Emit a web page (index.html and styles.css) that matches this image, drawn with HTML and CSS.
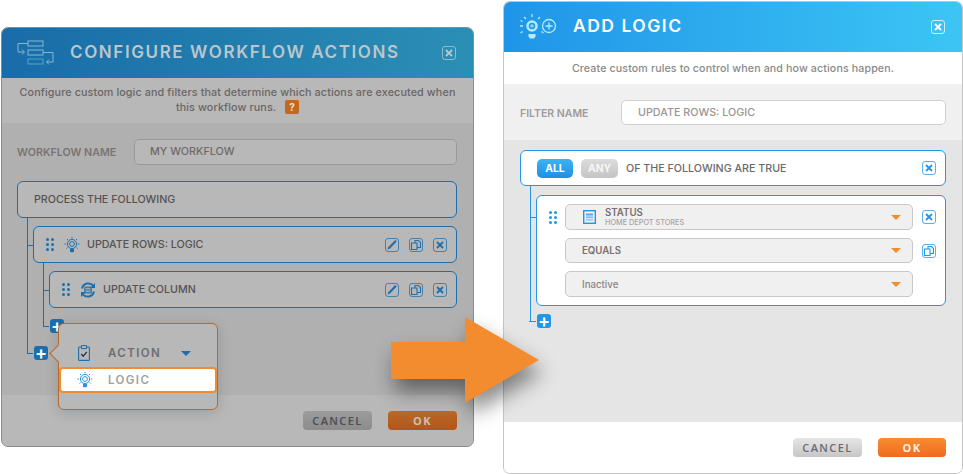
FILE: index.html
```html
<!DOCTYPE html>
<html lang="en">
<head>
  <meta charset="UTF-8">
  <meta name="viewport" content="width=device-width, initial-scale=1.0">
  <title>Workflow Logic</title>
  <link rel="stylesheet" href="styles.css">
</head>
<body>
  <svg class="sprites" width="0" height="0">
    <symbol id="i-close" viewBox="0 0 14 14">
      <rect x=".5" y=".5" width="13" height="13" rx="2.5" fill="none" stroke="currentColor" opacity=".75"/>
      <path d="M4 4l6 6M10 4l-6 6" fill="none" stroke="currentColor" stroke-width="1.8"/>
    </symbol>
    <symbol id="i-edit" viewBox="0 0 14 14">
      <rect x=".5" y=".5" width="13" height="13" rx="2.5" fill="none" stroke="currentColor" opacity=".75"/>
      <path d="M4.200 9.800l6.800-7" fill="none" stroke="currentColor" stroke-width="2.200"/>
      <path d="M2.500 11.500l.9-2.700 1.800 1.800z" fill="currentColor"/>
    </symbol>
    <symbol id="i-copy" viewBox="0 0 14 14">
      <rect x=".5" y=".5" width="13" height="13" rx="2.5" fill="none" stroke="currentColor" opacity=".75"/>
      <path d="M2.500 5h5.500v6.500H2.500zM6 5V2.500h3.500L11.500 4.500v5H8" fill="none" stroke="currentColor" stroke-width="1.100"/>
    </symbol>
    <symbol id="i-grip" viewBox="0 0 8 13">
      <g fill="currentColor">
        <circle cx="1.5" cy="1.6" r="1.5"/><circle cx="6.5" cy="1.6" r="1.5"/>
        <circle cx="1.5" cy="6.5" r="1.5"/><circle cx="6.5" cy="6.5" r="1.5"/>
        <circle cx="1.5" cy="11.4" r="1.5"/><circle cx="6.5" cy="11.4" r="1.5"/>
      </g>
    </symbol>
    <symbol id="i-bulb" viewBox="0 0 16 16">
      <g fill="none" stroke="currentColor">
        <circle cx="8" cy="7" r="4.6"/>
        <circle cx="8" cy="7" r="2.4"/>
        <path d="M8 0v1.400M3 2l1 1M13 2l-1 1M.5 7h1.600M13.900 7h1.600M2.500 11.500l1-1M13.500 11.500l-1-1" stroke-dasharray="1.4 .6"/>
      </g>
      <path d="M6 12h4v2.200l-1 1H7l-1-1z" fill="currentColor"/>
    </symbol>
    <symbol id="i-sync" viewBox="0 0 16 16">
      <path d="M2 6.500A6.500 6.500 0 0 1 13.500 4M14 9.500A6.500 6.500 0 0 1 2.500 12" fill="none" stroke="currentColor" stroke-width="2"/>
      <path d="M15 1v5h-5zM1 15v-5h5z" fill="currentColor"/>
      <rect x="4" y="4.500" width="8" height="7" rx="1" fill="currentColor" opacity=".8"/>
      <path d="M5.500 6.500h5M5.500 8h5M5.500 9.500h5" stroke="#b8b8b8" stroke-width=".7"/>
    </symbol>
    <symbol id="i-clipboard" viewBox="0 0 12 16">
      <rect x=".6" y="2" width="10.800" height="13.400" rx="1" fill="none" stroke="currentColor" stroke-width="1.100"/>
      <path d="M3.500 .6h5v3h-5z" fill="#b8b8b8" stroke="currentColor"/>
      <path d="M3.200 9l2 2.200 3.600-4.400" fill="none" stroke="#2b2f36" stroke-width="1.300"/>
    </symbol>
    <symbol id="i-doc" viewBox="0 0 13 14">
      <rect x=".7" y=".7" width="11.600" height="12.600" fill="none" stroke="currentColor" stroke-width="1.400"/>
      <rect x="3" y="3.500" width="7" height="2" fill="currentColor" opacity=".75"/>
      <rect x="3" y="6.500" width="7" height="1.600" fill="currentColor" opacity=".6"/>
      <rect x="3" y="9" width="7" height="1.600" fill="currentColor" opacity=".45"/>
    </symbol>
  </svg>

  <section class="dialog dialog-dim">
    <header class="head">
      <svg class="head-icon" width="38" height="26" viewBox="0 0 38 26" fill="none" stroke="#82b9d2">
        <rect x="11" y="1" width="15" height="5"/>
        <rect x="11" y="10" width="15" height="5"/>
        <rect x="11" y="19" width="15" height="5" stroke="#4ea6c6"/>
        <path d="M11 3.500H1V12h6M5 9.500L7.500 12 5 14.500"/>
        <path d="M26 12.500h10V22h-6.500M32 19.500L29.500 22l2.500 2.500"/>
      </svg>
      <h1 class="title">CONFIGURE WORKFLOW ACTIONS</h1>
      <svg class="btn-icon head-close"><use href="#i-close"/></svg>
    </header>
    <p class="intro">Configure custom logic and filters that determine which actions are executed when<br>this workflow runs. <span class="help">?</span></p>
    <div class="main">
      <div class="field">
        <label class="field-label">WORKFLOW NAME</label>
        <div class="field-input">MY WORKFLOW</div>
      </div>
      <div class="tree">
        <div class="node node-root">PROCESS THE FOLLOWING</div>
        <div class="branch">
          <div class="node node-child">
            <svg class="grip"><use href="#i-grip"/></svg>
            <svg class="node-icon"><use href="#i-bulb"/></svg>
            <span class="node-name">UPDATE ROWS: LOGIC</span>
            <svg class="btn-icon"><use href="#i-edit"/></svg>
            <svg class="btn-icon"><use href="#i-copy"/></svg>
            <svg class="btn-icon"><use href="#i-close"/></svg>
          </div>
          <div class="branch branch-nested">
            <div class="node node-child">
              <svg class="grip"><use href="#i-grip"/></svg>
              <svg class="node-icon"><use href="#i-sync"/></svg>
              <span class="node-name">UPDATE COLUMN</span>
              <svg class="btn-icon"><use href="#i-edit"/></svg>
              <svg class="btn-icon"><use href="#i-copy"/></svg>
              <svg class="btn-icon"><use href="#i-close"/></svg>
            </div>
            <div class="add add-nested">+</div>
          </div>
          <div class="add add-outer">+</div>
        </div>
      </div>
    </div>
    <footer class="foot">
      <button class="btn btn-cancel">CANCEL</button>
      <button class="btn btn-ok">OK</button>
    </footer>

    <div class="popup">
      <div class="popup-item">
        <svg class="popup-icon popup-clip"><use href="#i-clipboard"/></svg>
        <span class="popup-text">ACTION</span>
        <span class="popup-caret"></span>
      </div>
      <div class="popup-item popup-active">
        <svg class="popup-icon popup-bulb"><use href="#i-bulb"/></svg>
        <span class="popup-text">LOGIC</span>
      </div>
    </div>
  </section>

  <section class="dialog dialog-logic">
    <header class="head">
      <svg class="head-icon" width="38" height="26" viewBox="0 0 38 26" fill="none" stroke="#b5ecfb">
        <circle cx="13" cy="12" r="4.500" stroke-width="2.500"/>
        <circle cx="13" cy="12" r="1.200"/>
        <path d="M13 0v3M5 3l2 2M21 3l-2 2M1 12h3M1.500 19l2-1.500M24.500 19l-2-1.500M1.500 6.500l2 1" stroke-width="1.300"/>
        <path d="M9.500 20h7v2.500l-1.500 2h-4l-1.500-2z" fill="#b5ecfb" stroke="none"/>
        <circle cx="30" cy="12" r="6.500" stroke-width="1.300"/>
        <path d="M30 8.500v7M26.500 12h7" stroke-width="1.300"/>
      </svg>
      <h1 class="title">ADD LOGIC</h1>
      <svg class="btn-icon head-close"><use href="#i-close"/></svg>
    </header>
    <p class="intro">Create custom rules to control when and how actions happen.</p>
    <div class="field-band">
      <div class="field">
        <label class="field-label">FILTER NAME</label>
        <div class="field-input">UPDATE ROWS: LOGIC</div>
      </div>
    </div>
    <div class="main">
      <div class="tree">
        <div class="node node-root">
          <span class="toggle toggle-on">ALL</span>
          <span class="toggle toggle-off">ANY</span>
          <span class="node-name">OF THE FOLLOWING ARE TRUE</span>
          <svg class="btn-icon"><use href="#i-close"/></svg>
        </div>
        <div class="branch">
          <div class="rule">
            <div class="rule-row">
              <svg class="grip"><use href="#i-grip"/></svg>
              <div class="select select-two">
                <svg class="select-icon"><use href="#i-doc"/></svg>
                <div class="select-label">
                  <span class="select-main">STATUS</span>
                  <span class="select-sub">HOME DEPOT STORES</span>
                </div>
                <span class="caret"></span>
              </div>
              <svg class="btn-icon"><use href="#i-close"/></svg>
            </div>
            <div class="rule-row">
              <span class="grip"></span>
              <div class="select select-short"><span class="select-main">EQUALS</span><span class="caret"></span></div>
              <svg class="btn-icon"><use href="#i-copy"/></svg>
            </div>
            <div class="rule-row">
              <span class="grip"></span>
              <div class="select"><span class="select-value">Inactive</span><span class="caret"></span></div>
              <span class="btn-icon"></span>
            </div>
          </div>
          <div class="add add-outer">+</div>
        </div>
      </div>
    </div>
    <footer class="foot">
      <button class="btn btn-cancel">CANCEL</button>
      <button class="btn btn-ok">OK</button>
    </footer>
  </section>

  <svg class="arrow" width="190" height="130" viewBox="0 0 190 130">
    <path d="M10 35H84V10L158 53 84 96V72H10z" fill="#f28c2e"/>
  </svg>
</body>
</html>
```

FILE: styles.css
```css
html, body {
  margin: 0;
  padding: 0;
  height: 100%;
  background-color: #fff;
  overflow: hidden;
  font-family: 'Inter', sans-serif;
}

.sprites {
  position: absolute;
}

/* the two dialogs sit on a free canvas */
.dialog {
  --line: #2296e8;
  --ink: #6a6a6a;
  position: absolute;
  display: flex;
  flex-direction: column;
  box-sizing: border-box;
  border: 1px solid #c4c4c4;
  border-radius: 7px;
  overflow: hidden;
  background: #fff;
}

.dialog-dim {
  --line: #1c6fae;
  --ink: #565252;
  left: 1px;
  top: 27px;
  width: 473px;
  height: 420px;
  border-color: #8c8c8c;
  background: #b8b8b8;
  overflow: visible;
}

.dialog-logic {
  left: 503px;
  top: 1px;
  width: 460px;
  height: 473px;
}

.head {
  display: flex;
  align-items: center;
  height: 50px;
  flex-shrink: 0;
  padding: 0 17px 0 15px;
  background: linear-gradient(90deg, #2095e8, #3cc5f5);
  color: #fff;
}

.dialog-dim .head {
  background: linear-gradient(90deg, #196ca8, #2b8fb5);
  color: #b9c7cd;
  border-radius: 6px 6px 0 0;
}

.head-icon {
  flex-shrink: 0;
  margin-right: 15px;
}

.dialog-logic .head-icon {
  margin-right: 16px;
}

.title {
  flex: 1;
  margin: 0 0 2px;
  font-size: 17px;
  font-weight: 600;
  letter-spacing: 1.6px;
}

.dialog-logic .title {
  margin-bottom: 3px;
  font-size: 17.5px;
  letter-spacing: 1.5px;
}

.btn-icon {
  display: block;
  width: 14px;
  height: 14px;
  flex-shrink: 0;
  color: var(--line);
}

.head-close {
  color: currentColor;
}

.intro {
  margin: 0;
  padding: 9px 8px 0;
  height: 23px;
  font-size: 10.66px;
  line-height: 15px;
  font-weight: 500;
  color: #8a8a8a;
  text-align: center;
  letter-spacing: .12px;
}

.dialog-dim .intro {
  padding-top: 7px;
  height: 38px;
  color: #6a6666;
  font-size: 10.75px;
}

.help {
  display: inline-block;
  width: 14px;
  height: 14px;
  margin-left: 6px;
  border-radius: 2px;
  background: #c0691f;
  color: #e8e0d8;
  font-size: 10px;
  font-weight: 700;
  line-height: 14px;
}

.main {
  flex: 1;
  padding: 16px 16px 0 15px;
  background: #b0b0b0;
}

.dialog-logic .main {
  padding: 10px 16px 0;
  background: #e5e5e5;
}

.field-band {
  padding: 16px 16px 15px;
  background: #f0f0f0;
}

.field {
  display: flex;
  align-items: center;
}

.field-label {
  width: 117px;
  font-size: 10.7px;
  font-weight: 600;
  color: #7a7474;
}

.dialog-logic .field-label {
  width: 101px;
  padding-top: 1px;
  font-size: 10.5px;
  color: #a09a9a;
}

.field-input {
  flex: 1;
  box-sizing: border-box;
  height: 26px;
  padding-left: 15px;
  border: 1px solid #9a9a9a;
  border-radius: 5px;
  background: #b8b8b8;
  font-size: 10.75px;
  font-weight: 500;
  line-height: 24px;
  color: #6f6a6a;
}

.dialog-logic .field-input {
  height: 25px;
  padding-left: 16px;
  line-height: 24px;
  border-color: #cfcfcf;
  background: #fff;
  color: #9a9494;
}

.tree {
  margin-top: 16px;
}

.dialog-logic .tree {
  margin-top: 0;
}

.node {
  display: flex;
  align-items: center;
  box-sizing: border-box;
  height: 37px;
  border: 1px solid var(--line);
  border-radius: 6px;
  background: #b8b8b8;
  font-size: 10.7px;
  font-weight: 500;
  color: var(--ink);
}

.dialog-logic .node {
  height: 36px;
  background: #fff;
  padding-right: 9px;
}

.node-root {
  padding-left: 16px;
}

.node-child {
  position: relative;
  padding: 0 9px 0 12px;
  gap: 10px;
}

.node-name {
  flex: 1;
}

.node-icon {
  width: 16px;
  height: 16px;
  margin: 0 -3px 0 0;
  flex-shrink: 0;
  color: #1c6fae;
}

.grip {
  display: block;
  width: 8px;
  height: 13px;
  flex-shrink: 0;
  color: var(--line);
}

.branch {
  position: relative;
  margin-left: 10px;
  padding: 8px 0 0 6px;
}

.dialog-logic .branch {
  padding-top: 9px;
}

/* vertical tree line, stops at the centre of the + */
.branch::before {
  content: "";
  position: absolute;
  left: 0;
  top: 0;
  bottom: 7px;
  width: 1px;
  background: var(--line);
}

.node-child::before,
.rule::before,
.add::before {
  content: "";
  position: absolute;
  left: -7px;
  top: 50%;
  width: 6px;
  height: 1px;
  background: var(--line);
}

.branch-nested {
  padding-top: 8px;
}

.add {
  position: relative;
  width: 14px;
  height: 14px;
  border-radius: 3px;
  background: var(--line);
  color: #fff;
  font-size: 18px;
  font-weight: 600;
  line-height: 13px;
  text-align: center;
}

.add-nested {
  margin: 11px 0 0 1px;
}

.add-outer {
  margin: 13px 0 0 1px;
}

.dialog-logic .add-outer {
  margin-top: 8px;
}

.dialog-logic .add::before {
  left: -8px;
  width: 7px;
}

/* rule card on the right dialog */
.rule {
  position: relative;
  display: flex;
  flex-direction: column;
  gap: 8px;
  padding: 8px 9px 8px 12px;
  border: 1px solid var(--line);
  border-radius: 6px;
  background: #fff;
}

.rule::before {
  top: 21px;
  left: -7px;
}

.rule-row {
  display: flex;
  align-items: center;
  gap: 9px;
}

.rule-row .grip {
  margin-right: -1px;
}

.select {
  flex: 1;
  display: flex;
  align-items: center;
  box-sizing: border-box;
  height: 26px;
  padding: 0 11px 0 16px;
  border: 1px solid #c8c8c8;
  border-radius: 5px;
  background: #f0f0f0;
}

.select-short {
  height: 25px;
}

.select-two {
  padding-left: 17px;
}

.select-icon {
  width: 13px;
  height: 14px;
  margin-right: 9px;
  color: #2296e8;
}

.select-label {
  flex: 1;
  display: flex;
  flex-direction: column;
}

.select-main {
  flex: 1;
  font-size: 9.7px;
  font-weight: 600;
  line-height: 11px;
  color: #77716f;
}

.select-label .select-main {
  flex: none;
}

.select-sub {
  font-size: 7.3px;
  font-weight: 500;
  line-height: 9px;
  color: #a8a4a4;
}

.select-value {
  flex: 1;
  font-size: 9.7px;
  font-weight: 500;
  color: #8a8585;
}

.caret {
  width: 0;
  height: 0;
  border-left: 5px solid transparent;
  border-right: 5px solid transparent;
  border-top: 5px solid #f28c2e;
}

.toggle {
  box-sizing: border-box;
  width: 36px;
  height: 19px;
  margin-right: 8px;
  border-radius: 5px;
  font-size: 10.3px;
  font-weight: 700;
  line-height: 19px;
  text-align: center;
  color: #fff;
}

.toggle-on {
  background: linear-gradient(180deg, #3cb4f2, #1f8fe2);
}

.toggle-off {
  width: 37px;
  background: linear-gradient(180deg, #dcdcdc, #c4c4c4);
  color: #f6f6f6;
}

.foot {
  display: flex;
  justify-content: flex-end;
  align-items: center;
  gap: 16px;
  height: 51px;
  flex-shrink: 0;
  padding-right: 16px;
  background: #fff;
}

.dialog-dim .foot {
  background: #b8b8b8;
  border-radius: 0 0 6px 6px;
}

.btn {
  width: 69px;
  height: 19px;
  padding: 0;
  border: 0;
  border-radius: 4px;
  font-family: 'Open Sans', sans-serif;
  font-size: 11px;
  font-weight: 600;
  letter-spacing: 1.4px;
}

.btn-cancel {
  background: linear-gradient(180deg, #e6e6e6, #c6c6c6);
  color: #6b6b76;
}

.btn-ok {
  width: 68px;
  font-weight: 700;
  background: linear-gradient(180deg, #f68d2e, #f26a21);
  color: #fbeee4;
}

.dialog-dim .btn-cancel {
  background: linear-gradient(180deg, #9c9c9c, #8c8c8c);
  color: #4c4c54;
}

.dialog-dim .btn-ok {
  width: 69px;
  background: linear-gradient(180deg, #b8692a, #b45518);
  color: #c9c0b8;
}

/* add menu open over the tree */
.popup {
  position: absolute;
  left: 56px;
  top: 295px;
  box-sizing: border-box;
  width: 160px;
  height: 87px;
  padding-top: 17px;
  border: 1px solid #b5692a;
  border-radius: 6px;
  background: #b8b8b8;
  box-shadow: 0 3px 14px rgba(0, 0, 0, .14);
}

.popup::before {
  content: "";
  position: absolute;
  left: -7px;
  top: 23px;
  width: 12px;
  height: 12px;
  border-left: 1px solid #b5692a;
  border-bottom: 1px solid #b5692a;
  background: #b8b8b8;
  transform: rotate(45deg);
}

.popup-item {
  position: relative;
  display: flex;
  align-items: center;
  height: 24px;
  padding-left: 19px;
}

.popup-active {
  box-sizing: border-box;
  height: 26px;
  margin: 2px 0 0;
  border: 2px solid #f28c2e;
  border-radius: 4px;
  background: #fff;
  padding-left: 17px;
}

.popup-icon {
  flex-shrink: 0;
  margin-right: 18px;
}

.popup-clip {
  width: 12px;
  height: 16px;
  color: #1c6fae;
}

.popup-bulb {
  width: 16px;
  height: 16px;
  margin-left: -1px;
  margin-right: 15px;
  color: #2296e8;
}

.popup-text {
  width: 73px;
  font-size: 11.5px;
  font-weight: 600;
  letter-spacing: 1.4px;
  color: #6e6e6e;
}

.popup-active .popup-text {
  color: #a0a0a0;
}

.popup-caret {
  width: 0;
  height: 0;
  border-left: 5px solid transparent;
  border-right: 5px solid transparent;
  border-top: 5px solid #1c6fae;
}

.arrow {
  position: absolute;
  left: 381px;
  top: 307px;
  overflow: visible;
  filter: drop-shadow(4px 12px 10px rgba(0, 0, 0, .45));
}
```
